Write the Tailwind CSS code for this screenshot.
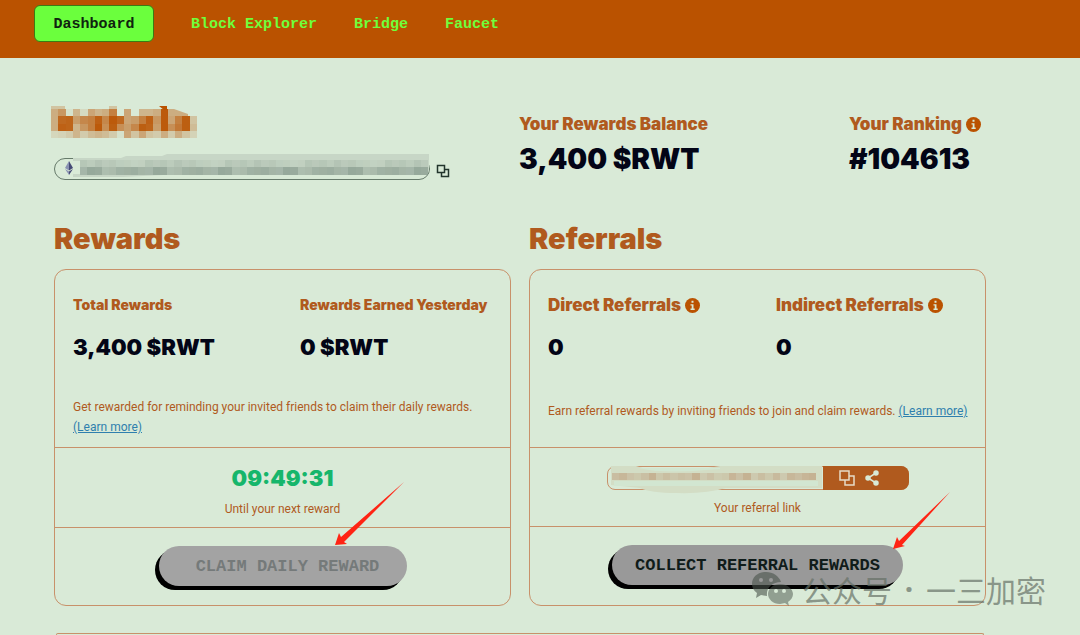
<!DOCTYPE html>
<html lang="en">
<head>
  <meta charset="UTF-8" />
  <meta name="viewport" content="width=device-width, initial-scale=1.0" />
  <title>Dashboard</title>
  <script src="https://cdn.jsdelivr.net/npm/@tailwindcss/browser@4"></script>
</head>
<body class="relative flex flex-col min-h-screen overflow-x-hidden bg-[#d9ead7] font-['Inter',sans-serif] text-[#b05a1e]">

  <header class="bg-[#ba5200] h-[58px] pl-[34px] pt-[5px]">
    <nav class="flex items-center gap-[37px] font-['Liberation_Mono',monospace] font-bold text-[15px] text-[#6fff3c]">
      <a href="#" class="flex items-center justify-center w-[120px] h-[37px] pt-1 rounded-md border border-[#3c7a14] bg-[#6bff3d] text-[#10240f]">Dashboard</a>
      <a href="#" class="pt-1">Block Explorer</a>
      <a href="#" class="pt-1">Bridge</a>
      <a href="#" class="pt-1">Faucet</a>
    </nav>
  </header>

  <main class="flex flex-col flex-1 pl-[54px] pr-[94px]">

    <!-- Account summary -->
    <section class="flex pt-[46px] h-[164px]">
      <div class="w-[465px] shrink-0">
        <svg id="name" class="block -ml-[3px]" width="148" height="36" role="img" aria-label="Account name hidden"></svg>
        <div class="flex items-center gap-1 mt-4 -ml-px">
          <div class="relative flex items-center w-[378px] h-6 pl-3">
            <svg class="absolute inset-0" width="378" height="24" fill="none">
              <rect x="1.500" y="2.500" width="375" height="21" rx="10.500" stroke="#667a6a" />
            </svg>
            <svg class="relative" width="8" height="14" viewBox="0 0 8 14">
              <path d="M4 0 0 7l4 2.500z" fill="#8a92b2" />
              <path d="M4 0v9.500L8 7z" fill="#454a75" />
              <path d="M0 8l4 6v-3.500z" fill="#8a92b2" />
              <path d="M8 8l-4 6v-3.500z" fill="#454a75" />
            </svg>
            <svg id="address" class="absolute left-5 -top-[2px]" width="362" height="25" role="img" aria-label="Address hidden"></svg>
          </div>
          <button aria-label="Copy address" class="pt-[6px] pl-px">
            <svg width="14" height="14" fill="none" stroke="#22352c" stroke-width="1.500">
              <path d="M1.500 1.500h7v7h-7z" />
              <path d="M8.500 5.500h4v7h-7v-4" />
            </svg>
          </button>
        </div>
      </div>
      <div class="w-[330px] pt-2">
        <h2 class="font-black text-[17px] leading-6">Your Rewards Balance</h2>
        <p class="mt-px font-black text-[28px] leading-[44px] text-[#030516]">3,400 $RWT</p>
      </div>
      <div class="pt-2">
        <h2 class="flex items-center gap-1 whitespace-nowrap font-black text-[17px] leading-6">Your Ranking
          <svg width="15" height="15" viewBox="0 0 15 15"><circle cx="7.500" cy="7.500" r="7.500" fill="#ba5200" /><path d="M6.500 2.800h2v2h-2zM5.500 6.200h3v4.300h1.200V12H5.500v-1.500h1.200V7.600H5.500z" fill="#d9ead7" /></svg>
        </h2>
        <p class="mt-px font-black text-[28px] leading-[44px] text-[#030516]">#104613</p>
      </div>
    </section>

    <div class="grid grid-cols-2 gap-[18px]">

      <!-- Rewards -->
      <section>
        <h1 class="pt-px font-black text-[29px] leading-8 mb-[14px]">Rewards</h1>
        <div class="border border-[#c8916a] rounded-xl">
          <div class="h-[178px] px-[18px] pt-[25px] border-b border-[#c8916a]">
            <div class="grid grid-cols-[227px_1fr]">
              <div>
                <h3 class="font-black text-sm leading-5">Total Rewards</h3>
                <p class="mt-4 font-black text-[22px] leading-8 text-[#030516]">3,400 $RWT</p>
              </div>
              <div>
                <h3 class="font-black text-sm leading-5 whitespace-nowrap">Rewards Earned Yesterday</h3>
                <p class="mt-4 font-black text-[22px] leading-8 text-[#030516]">0 $RWT</p>
              </div>
            </div>
            <p class="mt-[34px] font-['Roboto',sans-serif] text-xs leading-5">Get rewarded for reminding your invited friends to claim their daily rewards. <a href="#" class="inline-block text-[#2f7fae] underline">(Learn more)</a></p>
          </div>
          <div class="h-20 pt-[14px] border-b border-[#c8916a] text-center">
            <p class="font-black text-[22px] leading-8 text-[#16b66b]">09:49:31</p>
            <p class="mt-[5px] font-['Roboto',sans-serif] text-xs leading-5">Until your next reward</p>
          </div>
          <div class="flex justify-center h-[77px] pt-[18px]">
            <div class="relative">
              <button disabled class="w-[248px] h-10 pl-[10px] pt-[2px] rounded-full bg-[#a3a3a3] shadow-[-4px_4px_0_#000] font-['Liberation_Mono',monospace] font-bold text-[17px] text-[#757a7a]">CLAIM DAILY REWARD</button>
              <svg class="absolute left-[176px] -top-16" width="70" height="64"><path d="M0 63 4 51l2 4L69 0 9 60l3 2z" fill="#ff2414" /></svg>
            </div>
          </div>
        </div>
      </section>

      <!-- Referrals -->
      <section>
        <h1 class="pt-px font-black text-[29px] leading-8 mb-[14px]">Referrals</h1>
        <div class="border border-[#c8916a] rounded-xl">
          <div class="h-[178px] pl-[18px] pt-[25px] border-b border-[#c8916a]">
            <div class="grid grid-cols-[228px_1fr]">
              <div>
                <h3 class="flex items-center gap-1 font-black text-[17px] leading-5 whitespace-nowrap">Direct Referrals
                  <svg width="15" height="15" viewBox="0 0 15 15"><circle cx="7.500" cy="7.500" r="7.500" fill="#ba5200" /><path d="M6.500 2.800h2v2h-2zM5.500 6.200h3v4.300h1.200V12H5.500v-1.500h1.200V7.600H5.500z" fill="#d9ead7" /></svg>
                </h3>
                <p class="mt-4 font-black text-[22px] leading-8 text-[#030516]">0</p>
              </div>
              <div>
                <h3 class="flex items-center gap-1 font-black text-[17px] leading-5 whitespace-nowrap">Indirect Referrals
                  <svg width="15" height="15" viewBox="0 0 15 15"><circle cx="7.500" cy="7.500" r="7.500" fill="#ba5200" /><path d="M6.500 2.800h2v2h-2zM5.500 6.200h3v4.300h1.200V12H5.500v-1.500h1.200V7.600H5.500z" fill="#d9ead7" /></svg>
                </h3>
                <p class="mt-4 font-black text-[22px] leading-8 text-[#030516]">0</p>
              </div>
            </div>
            <p class="mt-[38px] font-['Roboto',sans-serif] text-xs leading-5 whitespace-nowrap">Earn referral rewards by inviting friends to join and claim rewards. <a href="#" class="text-[#2f7fae] underline">(Learn more)</a></p>
          </div>
          <div class="h-[79px] pt-[18px] border-b border-[#c8916a] text-center">
            <div class="relative flex w-[302px] h-6 mx-auto border border-[#c8916a] rounded-lg">
              <div class="flex-1"></div>
              <svg id="link" class="absolute left-[3px] -top-px" width="212" height="28" role="img" aria-label="Referral link hidden"></svg>
              <div class="flex items-center gap-[10px] w-[86px] -m-px pl-4 rounded-r-lg bg-[#b05a1e]">
                <button aria-label="Copy link">
                  <svg width="16" height="16" fill="none" stroke="#e6dcc8" stroke-width="1.500"><path d="M1 1h9v9H1z" /><path d="M10 6h5v9H6v-5" /></svg>
                </button>
                <button aria-label="Share link">
                  <svg width="14" height="16" fill="#d9ead7" stroke="#d9ead7" stroke-width="1.500"><path d="M11 3 3 8l8 5" fill="none" /><circle cx="11" cy="3" r="2" /><circle cx="3" cy="8" r="2" /><circle cx="11" cy="13" r="2" /></svg>
                </button>
              </div>
            </div>
            <p class="mt-2 font-['Roboto',sans-serif] text-xs leading-5">Your referral link</p>
          </div>
          <div class="flex justify-center h-[78px] pt-[18px]">
            <div class="relative">
              <button class="w-[291px] h-10 pt-[2px] rounded-full bg-[#999] shadow-[-4px_4px_0_#000] font-['Liberation_Mono',monospace] font-bold text-[17px] text-[#101c1a]">COLLECT REFERRAL REWARDS</button>
              <svg class="absolute left-[281px] -top-[54px]" width="58" height="58"><path d="M0 58 4 46l2 4L57 1 9 54l3 1z" fill="#ff2414" /></svg>
            </div>
          </div>
        </div>
      </section>
    </div>

    <section class="flex-1 mt-[27px] mx-[2px] border border-b-0 border-[#c8916a] rounded-t-xl"></section>
  </main>

  <!-- Watermark -->
  <div class="absolute right-[34px] bottom-6 flex items-center gap-[9px] text-[#667066]/70 font-['Noto_Sans_CJK_SC',sans-serif] text-[30px] leading-[44px] whitespace-nowrap">
    <svg width="42" height="36" viewBox="0 0 42 36">
      <path fill="#4a544b" fill-opacity=".6" fill-rule="evenodd" d="M15 1C7 1 1 6 1 13c0 4 2 7 5 9l-1 5 5-3 6 1c-1-8 5-14 14-14C28 5 22 1 15 1zM10 7a2 2 0 1 1 0 4 2 2 0 0 1 0-4zM20 7a2 2 0 1 1 0 4 2 2 0 0 1 0-4z" />
      <path fill="#4a544b" fill-opacity=".5" fill-rule="evenodd" d="M29 13c-7 0-12 5-12 10s5 10 12 10l5-1 4 3-1-4c3-2 5-5 5-8 0-5-6-10-13-10zM25 18a2 2 0 1 1 0 4 2 2 0 0 1 0-4zM33 18a2 2 0 1 1 0 4 2 2 0 0 1 0-4z" />
    </svg>
    <p class="flex">公众号<span class="w-[34px] text-center font-['Noto_Sans',sans-serif] font-bold">·</span>一三加密</p>
  </div>

  <script>
    // Draws rows of square cells that hide private text
    function mosaic(id, rows, cell, top, color, left = 0) {
      let html = '';
      rows.forEach((row, y) => {
        row.forEach((a, x) => {
          html += `<rect x="${left + x * cell}" y="${top + y * cell}" width="${cell}" height="${cell}" fill="${color}" fill-opacity="${a / 100}" shape-rendering="crispEdges"/>`;
        });
      });
      document.getElementById(id).innerHTML += html;
    }

    document.getElementById('name').innerHTML = '<path d="M0 2h14v3H0zM58 2h8v3h-8z" fill="#ba5200" fill-opacity=".25"/><path d="M108 2h8v4h-3z" fill="#ba5200"/><path d="M116 5h7l14 5v2h-21z" fill="#ba5200" fill-opacity=".4"/>';
    mosaic('name', [
      [40, 55, 5, 35, 10, 45, 35, 40, 70, 0, 45, 0, 35, 35, 40, 95, 0, 0, 0, 0],
      [40, 85, 88, 50, 65, 70, 90, 65, 95, 85, 45, 50, 70, 90, 55, 95, 45, 70, 92, 25],
      [40, 90, 88, 35, 55, 70, 95, 60, 92, 60, 50, 65, 92, 88, 50, 95, 60, 75, 92, 30],
      [12, 15, 20, 35, 20, 30, 35, 30, 20, 5, 45, 25, 45, 25, 20, 40, 20, 40, 25, 15]
    ], 7.3, 5, '#ba5200');

    const upper = [], lower = [];
    for (let i = 0; i < 48; i++) {
      upper.push([22, 8, 12, 25, 18, 6, 20, 15, 24, 10, 16][(i * 7) % 11]);
      lower.push([45, 62, 38, 55, 48, 66, 35, 52, 58][(i * 5) % 9]);
    }
    document.getElementById('address').innerHTML = '<path d="M0 4h48l5-2h36l5-2h262v16l-2 5H90l-40 2H0z" fill="#c7d6c6"/><path d="M0 7h7v13H0z" fill="#d9ead7"/>';
    mosaic('address', [upper, lower], 7.25, 6, '#7d9184', 7);

    document.getElementById('link').innerHTML = '<path d="M0 0h25q25 9 72 2l12-2h102v22H115q-20 6-50 5-25 0-36-5L0 19z" fill="#d3ddc5"/><path d="M27 2q25 6 68 2l14-1v-1H27zM3 15h204v5H3z" fill="#d2e6d1"/>';
    mosaic('link', [
      [45, 55, 38, 30, 42, 62, 32, 44, 34, 42, 38, 62, 28, 40, 25, 30, 58, 40, 62, 28, 44, 30, 50, 28, 55, 45, 58, 62]
    ], 7.3, 7, '#bd9775', 1);
  </script>
</body>
</html>
